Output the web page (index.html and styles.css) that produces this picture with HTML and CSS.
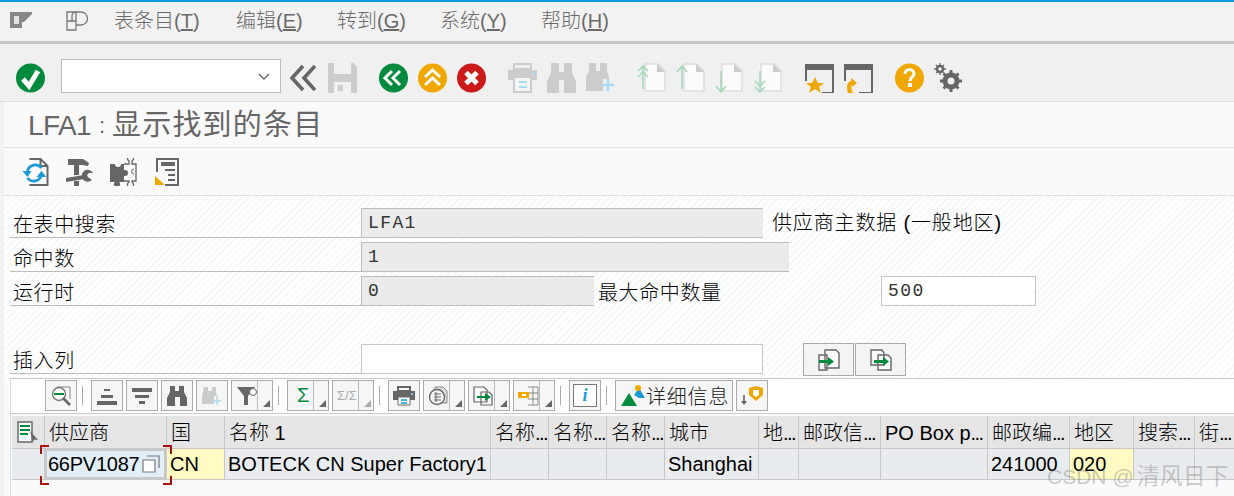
FILE: index.html
```html
<!DOCTYPE html>
<html lang="zh">
<head>
<meta charset="utf-8">
<title>LFA1: 显示找到的条目</title>
<link rel="stylesheet" href="styles.css">
</head>
<body>
<header class="menubar">
  <svg class="menu-ico first" viewBox="0 0 22 16"><path d="M0 0h22v2l-8 8h-2v6H0z" fill="#888"/><path d="M4 4h5v8H4z" fill="#e4e4e4"/></svg>
  <svg class="menu-ico second" viewBox="0 0 22 20"><path d="M1 1h9v18H1zM1 10h9M6 10V5a4 4 0 0 1 4-4h5a6 6 0 0 1 0 13h-5" fill="none" stroke="#777" stroke-width="1.300"/></svg>
  <nav class="menu">
    <span class="m1">表条目(<u>T</u>)</span>
    <span class="m2">编辑(<u>E</u>)</span>
    <span class="m3">转到(<u>G</u>)</span>
    <span class="m4">系统(<u>Y</u>)</span>
    <span class="m5">帮助(<u>H</u>)</span>
  </nav>
</header>

<div class="page">
  <div class="toolbar">
    <svg class="ti" viewBox="0 0 29 30"><circle cx="14.500" cy="15" r="14.500" fill="#008a3e"/><path d="M7 16l6 7L22 8" fill="none" stroke="#fff" stroke-width="5"/></svg>
    <div class="combo"><svg class="chev" viewBox="0 0 12 7"><path d="M1 1l5 5 5-5" fill="none" stroke="#666" stroke-width="1.400"/></svg></div>
    <svg class="back" viewBox="0 0 26 28"><path d="M13 2L2 14l11 12M25 2L14 14l11 12" fill="none" stroke="#666" stroke-width="3.600"/></svg>
    <svg class="ti" viewBox="0 0 29 30"><path d="M0 0h25l4 4v26H0z" fill="#ccc"/><path d="M6 0h17v11H6z" fill="#f0f0f0"/><path d="M6 19h17v11H6z" fill="#f0f0f0"/><path d="M10 22h5v6h-5z" fill="#ccc"/></svg>
    <div class="tgroup">
      <svg class="ti" viewBox="0 0 29 30"><circle cx="14.500" cy="15" r="14.500" fill="#008a3e"/><path d="M13 8l-7 7 7 7M21 8l-7 7 7 7" fill="none" stroke="#fff" stroke-width="3"/></svg>
      <svg class="ti" viewBox="0 0 29 30"><circle cx="14.500" cy="15" r="14.500" fill="#f0a800"/><path d="M7 14l7.500-7 7.500 7M7 22l7.500-7 7.500 7" fill="none" stroke="#fff" stroke-width="3"/></svg>
      <svg class="ti" viewBox="0 0 29 30"><circle cx="14.500" cy="15" r="14.500" fill="#cc1919"/><path d="M9 9.500l11 11M20 9.500l-11 11" fill="none" stroke="#fff" stroke-width="5"/></svg>
    </div>
    <div class="tgroup">
      <svg class="ti" viewBox="0 0 29 30"><path d="M6 1h17v5H6z" fill="none" stroke="#ccc" stroke-width="2"/><path d="M0 7h29v10H0z" fill="#ccc"/><path d="M6 14h17v15H6z" fill="#f4f4f4" stroke="#ccc" stroke-width="2"/><path d="M11 19h8M11 24h8" stroke="#a8daf0" stroke-width="2"/><path d="M24 9h3v2h-3z" fill="#a8daf0"/></svg>
      <svg class="ti" viewBox="0 0 29 30"><path d="M4 0h8v9h5V0h8v10l4 8v12H17V17h-5v13H0V18l4-8z" fill="#ccc"/></svg>
      <svg class="ti" viewBox="0 0 29 30"><path d="M3 0h7v8h4V0h7v8l2 6v2h-6v12H0V14l3-6z" fill="#ccc"/><path d="M22 16v12M16 22h12" stroke="#a8daf0" stroke-width="2.400"/></svg>
    </div>
    <div class="tgroup">
      <svg class="ti" viewBox="0 0 29 30"><path d="M8 1h13l7 7v20H8z" fill="#fbfbfb" stroke="#ddd" stroke-width="1.500"/><path d="M20 1v8h8z" fill="#ccc"/><path d="M6 26V3M1 8l5-5 5 5M1 14l5-5 5 5" fill="none" stroke="#a9d8bd" stroke-width="1.600"/></svg>
      <svg class="ti" viewBox="0 0 29 30"><path d="M8 1h13l7 7v20H8z" fill="#fbfbfb" stroke="#ddd" stroke-width="1.500"/><path d="M20 1v8h8z" fill="#ccc"/><path d="M6 26V3M1 9l5-6 5 6" fill="none" stroke="#a9d8bd" stroke-width="1.600"/></svg>
      <svg class="ti" viewBox="0 0 29 30"><path d="M7 1h13l7 7v20H7z" fill="#fbfbfb" stroke="#ddd" stroke-width="1.500"/><path d="M19 1v8h8z" fill="#ccc"/><path d="M6 8v21M1 23l5 6 5-6" fill="none" stroke="#a9d8bd" stroke-width="1.600"/></svg>
      <svg class="ti" viewBox="0 0 29 30"><path d="M7 1h13l7 7v20H7z" fill="#fbfbfb" stroke="#ddd" stroke-width="1.500"/><path d="M19 1v8h8z" fill="#ccc"/><path d="M6 8v21M1 18l5 5 5-5M1 24l5 5 5-5" fill="none" stroke="#a9d8bd" stroke-width="1.600"/></svg>
    </div>
    <div class="tgroup">
      <svg class="ti" viewBox="0 0 29 30"><path d="M0 1h29v6H0z" fill="#666"/><path d="M1 7v11M28 7v23h-11" fill="none" stroke="#666" stroke-width="2"/><path d="M10 14l3 6h6l-5 4 2 6-6-4-6 4 2-6-5-4h6z" fill="#f0a800"/></svg>
      <svg class="ti" viewBox="0 0 29 30"><path d="M0 1h29v6H0z" fill="#666"/><path d="M1 7v11M28 7v23h-13" fill="none" stroke="#666" stroke-width="2"/><path d="M4 30c-2-6-1-11 3-12v-3l6 5-5 4v-3c-1 2-1 5 1 9z" fill="#f0a800"/></svg>
    </div>
    <div class="tgroup">
      <svg class="ti" viewBox="0 0 29 30"><circle cx="14.500" cy="15" r="14.500" fill="#f0a800"/><path d="M10 11c0-6 9-6 9 0 0 3-4 3-4 7" fill="none" stroke="#fff" stroke-width="3"/><path d="M13 20h4v4h-4z" fill="#fff"/></svg>
      <svg class="ti" viewBox="0 0 29 30"><g fill="none" stroke="#666"><circle cx="17" cy="18" r="6" stroke-width="5"/><path d="M17 7v22M6 18h22M9.500 10.500l15 15M24.500 10.500l-15 15" stroke-width="3"/><circle cx="6" cy="6" r="3" stroke-width="2.400"/><path d="M6 0v12M0 6h12M2 2l8 8M10 2l-8 8" stroke-width="1.300"/></g><circle cx="17" cy="18" r="3.500" fill="#f0f0f0"/><circle cx="6" cy="6" r="1.800" fill="#f0f0f0"/></svg>
    </div>
  </div>

  <h1 class="title"><span class="lat">LFA1</span><span class="colon">:</span>显示找到的条目</h1>

  <div class="apptools">
    <svg class="ai" viewBox="0 0 26 28"><path d="M7 1h11l7 7v19H7" fill="#fafafa" stroke="#666" stroke-width="2"/><path d="M18 1v7h7" fill="none" stroke="#666" stroke-width="2"/><path d="M5 13a8 8 0 0 1 14-3M19 17a8 8 0 0 1-14 3" fill="none" stroke="#1a9ad6" stroke-width="2.800"/><path d="M0 13h9l-4 6zM14 19l5-6 5 6z" fill="#1a9ad6"/></svg>
    <svg class="ai" viewBox="0 0 27 28"><path d="M2 1h15l6 4-1 3-6-1h-3v10H8V7H2zM8 23h5v5H8z" fill="#666"/><path d="M0 22l18-3" stroke="#666" stroke-width="4"/><path d="M27 15a6 6 0 1 0-1 7l-4-3-1-2 2-2z" fill="#666"/></svg>
    <svg class="ai" viewBox="0 0 27 28"><path d="M0 6h5a3 3 0 0 0 6 0h3v18H9a3 3 0 1 1-4 0H0z" fill="#666"/><path d="M14 6h5V3a3 3 0 1 1 3 0v3h4v17h-4v1a3 3 0 1 1-3 0v-1h-5" fill="#fafafa" stroke="#666" stroke-width="1.300"/><circle cx="15" cy="15" r="3" fill="#666"/><path d="M24 11a2.500 2.500 0 1 0 0 5" fill="none" stroke="#666"/></svg>
    <svg class="ai doc" viewBox="0 0 24 28"><path d="M2 14V1h21v26H10" fill="none" stroke="#666" stroke-width="2"/><path d="M6 4h14v4H6zM10 11h10v2H10zM13 16h7v2h-7zM13 21h7v2h-7z" fill="#666"/><path d="M0 27V18l10 9z" fill="#f0a800"/></svg>
  </div>

  <section class="form">
    <div class="row"><label class="lbl">在表中搜索</label><div class="field ro w402">LFA1</div><span class="desc">供应商主数据 (一般地区)</span></div>
    <div class="row"><label class="lbl">命中数</label><div class="field ro w428">1</div></div>
    <div class="row"><label class="lbl">运行时</label><div class="field ro w233">0</div><label class="lbl2">最大命中数量</label><div class="field edit w155">500</div></div>
    <div class="row last"><label class="lbl">插入列</label><div class="field edit w402"></div>
      <div class="fbtns">
        <button class="fbtn"><svg class="fi" viewBox="0 0 22 22"><path d="M7 1h11l3 3v15H7zM1 6h8v15H1z" fill="#fafafa" stroke="#666" stroke-width="1.400"/><path d="M1 11h9V8l6 4.500-6 4.500v-3H1z" fill="#008a3e"/></svg></button>
        <button class="fbtn"><svg class="fi" viewBox="0 0 22 22"><path d="M1 1h11l2 3v12H1zM8 6h10l3 3v12H8z" fill="#fafafa" stroke="#666" stroke-width="1.400"/><path d="M4 11h9V8l6 4.500-6 4.500v-3H4z" fill="#008a3e"/></svg></button>
      </div>
    </div>
  </section>

  <section class="alv">
    <div class="alvbar">
      <button class="btn"><svg class="bi" viewBox="0 0 20 20"><path d="M6 1h13v12" fill="none" stroke="#888"/><circle cx="8" cy="8" r="6.500" fill="#fff" stroke="#777" stroke-width="1.400"/><path d="M3 7h10v2H3z" fill="#008a3e"/><path d="M12 12l7 7" stroke="#666" stroke-width="2.600"/></svg></button>
      <i class="sep"></i>
      <button class="btn"><svg class="bi" viewBox="0 0 20 20"><path d="M7 3h6v2H7zM4 9h12v3H4zM0 15h20v4H0z" fill="#666"/></svg></button>
      <button class="btn"><svg class="bi" viewBox="0 0 20 20"><path d="M0 2h20v4H0zM3 9h14v3H3zM7 15h6v3H7z" fill="#666"/></svg></button>
      <button class="btn"><svg class="bi" viewBox="0 0 20 20"><path d="M3 0h5v5h4V0h5v6l3 6v8h-7v-9H8v9H0v-8l3-6z" fill="#666"/></svg></button>
      <button class="btn"><svg class="bi" viewBox="0 0 20 20"><path d="M2 1h4v4h4V1h4v5l1 4H12v8H0v-8z" fill="#ccc"/><path d="M15 10v9M11 15h8" stroke="#a8daf0" stroke-width="1.400"/></svg></button>
      <button class="btn split"><svg class="bi" viewBox="0 0 20 20"><path d="M0 1h18l-7 9v9H7v-9z" fill="#666"/><circle cx="16" cy="6" r="3.500" fill="#fff" stroke="#666"/></svg><b class="arr"></b></button>
      <i class="sep"></i>
      <button class="btn split"><span class="sum">Σ</span><b class="arr"></b></button>
      <button class="btn split dim"><span class="frac">Σ/Σ</span><b class="arr"></b></button>
      <i class="sep"></i>
      <button class="btn"><svg class="bi" viewBox="0 0 22 20"><path d="M5 1h12v4H5z" fill="none" stroke="#666" stroke-width="2"/><path d="M0 5h22v9H0z" fill="#666"/><path d="M5 11h12v8H5z" fill="#fff" stroke="#666"/><path d="M8 14h6M8 17h6" stroke="#1a9ad6" stroke-width="1.300"/><path d="M18 7h2v2h-2z" fill="#7cc8ea"/></svg></button>
      <button class="btn split"><svg class="bi" viewBox="0 0 22 20"><path d="M7 1h8l4 4v12H7z" fill="#ddd" stroke="#888"/><circle cx="9" cy="11" r="7.500" fill="#f4f4f4" stroke="#666" stroke-width="1.400"/><path d="M6 8h7M6 11h7M6 14h7M8 6v10" stroke="#666"/></svg><b class="arr"></b></button>
      <button class="btn split"><svg class="bi" viewBox="0 0 22 20"><path d="M1 1h10l3 3v12H1zM8 6h8l3 3v10H8z" fill="#fafafa" stroke="#666" stroke-width="1.200"/><path d="M4 10h8V7l6 4-6 4v-3H4z" fill="#008a3e"/></svg><b class="arr"></b></button>
      <button class="btn split"><svg class="bi" viewBox="0 0 22 20"><path d="M10 1h10v18H10" fill="none" stroke="#888"/><path d="M10 7h10M10 13h10M15 1v18" stroke="#888"/><path d="M0 6h11v6H0z" fill="#f0a800"/><path d="M4 8h4v2H4z" fill="#fff"/></svg><b class="arr"></b></button>
      <i class="sep"></i>
      <button class="btn"><span class="info">i</span></button>
      <i class="sep"></i>
      <button class="btn wide"><svg class="mount" viewBox="0 0 24 22"><path d="M0 21L8 8l8 13z" fill="#008a3e"/><path d="M13 10l5-7 6 10h-6z" fill="#1a9ad6"/><circle cx="17" cy="3" r="3" fill="#f0a800"/></svg><span>详细信息</span></button>
      <button class="btn"><svg class="bi" viewBox="0 0 22 20"><path d="M8 2l7-2 7 2v7l-7 6-7-6z" fill="#f0a800"/><path d="M12 4h6v5l-3 2-3-2z" fill="#fff"/><path d="M3 9v7" stroke="#666" stroke-width="1.600"/><path d="M0 15h6l-3 4z" fill="#666"/></svg></button>
    </div>

    <div class="grid head">
      <div class="c sel"><svg class="selico" viewBox="0 0 22 22"><path d="M1 1h14v20H1z" fill="#fafafa" stroke="#666" stroke-width="1.400"/><path d="M3 4h10v2H3zM3 8h10v2H3zM3 12h8v2H3z" fill="#008a3e"/><path d="M13 10l8 9-4-.500-1 3z" fill="#666"/></svg></div>
      <div class="c">供应商</div><div class="c">国</div><div class="c">名称 1</div>
      <div class="c">名称<span class="d">...</span></div><div class="c">名称<span class="d">...</span></div><div class="c">名称<span class="d">...</span></div>
      <div class="c">城市</div><div class="c">地<span class="d">...</span></div><div class="c">邮政信<span class="d">...</span></div>
      <div class="c">PO Box p<span class="d">...</span></div><div class="c">邮政编<span class="d">...</span></div><div class="c">地区</div>
      <div class="c">搜索<span class="d">...</span></div><div class="c">街<span class="d">...</span></div>
    </div>
    <div class="grid body">
      <div class="c sel"></div>
      <div class="c cur">66PV1087<svg class="copy" viewBox="0 0 18 18"><path d="M5 1h12v12" fill="none" stroke="#777" stroke-width="1.200"/><path d="M1 5h12v12H1z" fill="#fff" stroke="#777" stroke-width="1.200"/></svg></div>
      <div class="c key">CN</div><div class="c">BOTECK CN Super Factory1</div>
      <div class="c"></div><div class="c"></div><div class="c"></div>
      <div class="c">Shanghai</div><div class="c"></div><div class="c"></div><div class="c"></div>
      <div class="c">241000</div><div class="c key">020</div><div class="c"></div><div class="c"></div>
    </div>
    <svg class="focus" viewBox="0 0 132 40"><path d="M1 9V1h8M123 1h8v8M1 31v8h8M123 39h8v-8" fill="none" stroke="#a80f0f" stroke-width="2"/></svg>
  </section>
</div>
<div class="mark">CSDN @<span class="markc">清风日下</span></div>
</body>
</html>
```
FILE: styles.css
```css
* { box-sizing: border-box; }
html, body { margin: 0; height: 496px; overflow: hidden; }
body {
  background: #f2f2f2;
  font-family: "Noto Sans CJK SC", "Liberation Sans", sans-serif;
  color: #000;
  position: relative;
}
.menubar {
  height: 44px;
  border-top: 2px solid #0a9bdc;
  border-bottom: 3px solid #c6c6c6;
  background: #f2f2f2;
  display: flex;
  align-items: center;
}
.menu-ico { display: block; }
.menu-ico.first { width: 22px; height: 16px; margin: -4px 0 0 10px; }
.menu-ico.second { width: 22px; height: 20px; margin: -2px 0 0 34px; }
.menu { display: flex; margin: -2px 0 0 26px; font-size: 20px; color: #6a6a6a; line-height: 34px; font-weight: 300; font-family: "Liberation Sans", "Noto Sans CJK SC", sans-serif; }
.menu span { display: block; }
.m1 { width: 122px; } .m2 { width: 101px; } .m3 { width: 103px; } .m4 { width: 101px; }
.page { margin-left: 4px; background: #fafafa; height: 452px; }
.toolbar {
  margin-left: -4px;
  height: 58px;
  background: #f0f0f0;
  border-bottom: 1px solid #dcdcdc;
  display: flex;
  align-items: center;
  padding: 11px 0 0 16px;
}
.ti { width: 29px; height: 30px; display: block; flex: none; }
.tgroup { display: flex; gap: 10px; margin-left: 22px; }
.combo {
  width: 220px; height: 34px; margin: 0 0 4px 16px; background: #fff;
  border: 1px solid #bdbdbd; display: flex; align-items: center; justify-content: flex-end; padding-right: 10px;
}
.chev { width: 12px; height: 7px; display: block; }
.back { width: 26px; height: 28px; margin: 0 12px 0 9px; flex: none; display: block; }
.title {
  margin: 0;
  height: 46px;
  padding-left: 24px;
  font-size: 29px;
  line-height: 47px;
  font-weight: 400;
  color: #666;
  letter-spacing: 1.200px;
  border-bottom: 1px solid #dfdfdf;
  white-space: nowrap;
  display: flex;
  font-family: "Liberation Sans", "Noto Sans CJK SC", sans-serif;
}
.lat { font-size: 28px; letter-spacing: -.6px; }
.colon { font-size: 22px; letter-spacing: 0; width: 21px; padding-left: 8px; flex: none; }
.apptools {
  height: 48px;
  display: flex;
  align-items: center;
  gap: 17px;
  padding-left: 18px;
  border-bottom: 1px solid #dfdfdf;
}
.ai { width: 27px; height: 28px; display: block; flex: none; }
.ai.doc { width: 24px; margin-left: 1px; }
.form {
  height: 182px;
  background: repeating-linear-gradient(135deg, #fff 0 3px, #f6f8fa 3px 5px);
  padding: 12px 0 0 6px;
}
.row { display: flex; height: 30px; margin-bottom: 4px; position: relative; }
.row.last { margin-top: 38px; margin-bottom: 0; }
.lbl {
  width: 351px; flex: none; height: 30px; border-bottom: 1px solid #bdbdbd;
  font-size: 20px; line-height: 31px; letter-spacing: .6px; padding-left: 3px; font-weight: 300;
}
.lbl2 { width: 287px; flex: none; padding-left: 4px; font-size: 20px; line-height: 31px; letter-spacing: .6px; font-weight: 300; }
.field {
  height: 30px; flex: none; padding-left: 6px;
  font-family: "Liberation Mono", monospace; font-size: 18px; line-height: 28px; letter-spacing: 1.400px;
}
.ro { background: #ebebeb; border: 1px solid #bdbdbd; border-width: 1px 0 1px 1px; color: #333; }
.edit { background: #fff; border: 1px solid #c6c6c6; color: #333; }
.w402 { width: 402px; } .w428 { width: 428px; } .w233 { width: 233px; } .w155 { width: 155px; }
.desc { margin-left: 9px; font-size: 20px; line-height: 30px; letter-spacing: .85px; font-weight: 300; font-family: "Liberation Sans", "Noto Sans CJK SC", sans-serif; white-space: nowrap; }
.fbtns { display: flex; gap: 1px; margin: -1px 0 0 40px; }
.fbtn { width: 51px; height: 33px; background: #f4f4f4; border: 1px solid #aaa; padding: 0; display: flex; align-items: center; justify-content: center; }
.fi { width: 22px; height: 22px; display: block; }
.alv {
  margin: 0 0 0 6px;
  border-top: 1px solid #c8c8c8;
  border-left: 1px solid #dcdcdc;
  position: relative;
  height: 118px;
  background: #fafafa;
}
.alvbar {
  height: 35px;
  background: #fff;
  border-bottom: 1px solid #c8c8c8;
  display: flex;
  padding: 1px 0 0 34px;
  gap: 3px;
  align-items: flex-start;
}
.btn {
  width: 32px; height: 31px; flex: none; padding: 0; background: #f6f6f6; border: 1px solid #aaa;
  display: flex; align-items: center; justify-content: center; position: relative;
  font-family: inherit;
}
.btn.split { width: 42px; justify-content: flex-start; padding-left: 4px; }
.arr { position: absolute; right: 0; top: 0; width: 15px; height: 29px; border-left: 1px solid #bbb; }
.arr::after { content: ""; position: absolute; right: 2px; bottom: 3px; border-style: solid; border-width: 0 0 7px 7px; border-color: transparent transparent #666 transparent; }
.dim .arr::after { border-bottom-color: #aaa; }
.bi { width: 22px; height: 20px; display: block; }
.sep { width: 1px; height: 19px; background: #aaa; margin: 6px 5px 0 2px; flex: none; }
.sum { font: 20px "Liberation Sans", sans-serif; color: #008a3e; padding-left: 5px; }
.frac { font: 13px "Liberation Sans", sans-serif; color: #aaa; }
.info { width: 24px; height: 23px; border: 1px solid #777; background: #fff; color: #1a9ad6; font: italic bold 18px/21px "Liberation Serif", serif; text-align: center; display: block; }
.btn.wide { width: 118px; justify-content: flex-start; padding-left: 5px; font-size: 20px; letter-spacing: .8px; font-weight: 300; color: #222; gap: 1px; }
.mount { width: 24px; height: 22px; display: block; flex: none; }
.grid {
  display: grid;
  grid-template-columns: 33px 122px 58px 266px 58px 58px 58px 94px 40px 82px 107px 82px 64px 61px 39px;
  margin-left: 1px;
}
.head { height: 33px; margin-top: 2px; background: #e5e5e5; border-bottom: 1px solid #c8c8c8; }
.body { height: 31px; background: #e9ecef; border-bottom: 1px solid #c8c8c8; }
.c {
  border-right: 1px solid #c8c8c8;
  padding-left: 4px;
  font-size: 20px;
  white-space: nowrap;
  overflow: hidden;
  font-family: "Liberation Sans", "Noto Sans CJK SC", sans-serif;
}
.d { letter-spacing: -1.600px; }
.head .c { line-height: 35px; font-weight: 300; }
.head .c:last-child, .body .c:last-child { border-right: 0; }
.body .c { line-height: 30px; padding-left: 3px; }
.sel { padding: 0 !important; display: flex; align-items: center; justify-content: center; }
.selico { width: 22px; height: 22px; display: block; }
.cur { background: #e3eff8; box-shadow: inset 0 0 0 2px #c8c8c8; display: flex; align-items: center; gap: 3px; letter-spacing: -.25px; }
.copy { width: 18px; height: 18px; display: block; flex: none; }
.key { background: #fffbc2; }
.focus { position: absolute; left: 29px; top: 66px; width: 132px; height: 40px; }
.mark {
  position: absolute; left: 1047px; top: 463px; font: 21px/26px "Liberation Sans", "Noto Sans CJK SC", sans-serif;
  color: rgba(130, 130, 130, .42); white-space: nowrap;
}
.markc { font-size: 23px; margin-left: 3px; }
```
